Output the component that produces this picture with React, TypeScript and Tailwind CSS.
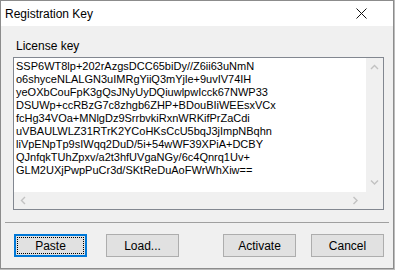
import React from "react"

const KEY_LINES = [
  "SSP6WT8lp+202rAzgsDCC65biDy//Z6ii63uNmN",
  "o6shyceNLALGN3uIMRgYiiQ3mYjle+9uvIV74IH",
  "yeOXbCouFpK3gQsJNyUyDQiuwlpwIcck67NWP33",
  "DSUWp+ccRBzG7c8zhgb6ZHP+BDouBIiWEEsxVCx",
  "fcHg34VOa+MNlgDz9SrrbvkiRxnWRKifPrZaCdi",
  "uVBAULWLZ31RTrK2YCoHKsCcU5bqJ3jImpNBqhn",
  "liVpENpTp9sIWqq2DuD/5i+54wWF39XPiA+DCBY",
  "QJnfqkTUhZpxv/a2t3hfUVgaNGy/6c4Qnrq1Uv+",
  "GLM2UXjPwpPuCr3d/SKtReDuAoFWrWhXiw==",
]

const Chevron = ({ dir }: { dir: "up" | "down" | "left" | "right" }) => {
  const d = {
    up: "M1 5 L4.5 1.5 L8 5",
    down: "M1 1.5 L4.5 5 L8 1.5",
    left: "M5 1 L1.5 4.5 L5 8",
    right: "M1.5 1 L5 4.5 L1.5 8",
  }[dir]
  const wide = dir === "up" || dir === "down"
  return (
    <svg width={wide ? 9 : 7} height={wide ? 7 : 9} viewBox={wide ? "0 0 9 7" : "0 0 7 9"}>
      <path d={d} fill="none" stroke="#c2c2c2" strokeWidth="1.4" />
    </svg>
  )
}

const WinButton = ({ label, focused }: { label: string; focused?: boolean }) => (
  <button
    className={
      focused
        ? "flex h-[23px] w-[73px] items-center justify-center border-2 border-[#0078d7] bg-[#e1e1e1] p-[1px] text-[12px] text-black"
        : "flex h-[23px] w-[73px] items-center justify-center border border-[#adadad] bg-[#e1e1e1] text-[12px] text-black"
    }
  >
    {focused ? (
      <span className="flex h-full w-full items-center justify-center border border-dotted border-black">
        {label}
      </span>
    ) : (
      label
    )}
  </button>
)

export default function App() {
  return (
    <div className="h-[270px] w-[395px] bg-[#bcbcbc] font-['Liberation_Sans',Arial,sans-serif]">
      <div className="flex h-[269px] w-[394px] flex-col border border-[#8c8c8c] bg-[#f0f0f0]">
        <div className="flex h-[25px] items-center justify-between bg-white pl-[4px] pr-[26px]">
          <span className="text-[12px] text-black">Registration Key</span>
          <svg width="11" height="11" viewBox="0 0 11 11">
            <path d="M0.5 0.5 L10.5 10.5 M10.5 0.5 L0.5 10.5" stroke="#111" strokeWidth="1" />
          </svg>
        </div>
        <div className="flex flex-1 flex-col">
          <div className="ml-[15px] mt-[13px] text-[12px] leading-[14px] text-black">License key</div>
          <div className="ml-[12px] mt-[4px] flex h-[153px] w-[371px] flex-col border border-[#828790] bg-white">
            <div className="flex min-h-0 flex-1">
              <div className="flex-1 overflow-hidden whitespace-pre pl-[2px] pt-[2px] text-[11px] leading-[13px] text-black">
                {KEY_LINES.map((l) => (
                  <div key={l}>{l}</div>
                ))}
              </div>
              <div className="flex w-[17px] flex-col items-center justify-between bg-[#f0f0f0] py-[6px]">
                <Chevron dir="up" />
                <Chevron dir="down" />
              </div>
            </div>
            <div className="flex h-[17px] items-center justify-between bg-[#f0f0f0] pl-[6px] pr-[24px]">
              <Chevron dir="left" />
              <Chevron dir="right" />
            </div>
          </div>
          <div className="ml-[4px] mt-[12px] h-[2px] w-[384px] border-t border-[#a0a0a0] border-b-white" />
          <div className="ml-[13px] mt-[10px] flex w-[370px] items-center">
            <WinButton label="Paste" focused />
            <div className="w-[19px]" />
            <WinButton label="Load..." />
            <div className="flex-1" />
            <WinButton label="Activate" />
            <div className="w-[15px]" />
            <WinButton label="Cancel" />
          </div>
        </div>
      </div>
    </div>
  )
}
